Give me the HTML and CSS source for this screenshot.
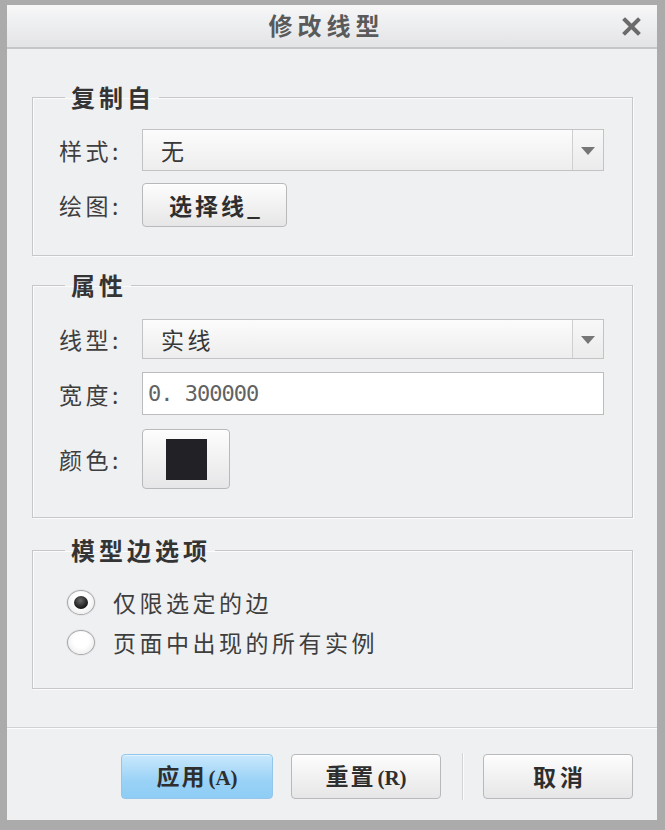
FILE: index.html
```html
<!DOCTYPE html>
<html lang="zh-CN">
<head>
<meta charset="utf-8">
<title>修改线型</title>
<link rel="stylesheet" href="styles.css">
</head>
<body>
<div class="frame">
  <div class="window">
    <div class="titlebar">
      <span></span>
      <span class="title">修改线型</span>
      <span class="close">
        <svg width="19" height="19" viewBox="0 0 19 19"><path d="M3 3 L16 16 M16 3 L3 16" stroke="#6b6b6b" stroke-width="4" stroke-linecap="square"/></svg>
      </span>
    </div>
    <div class="content">
      <fieldset class="group g1">
        <legend>复制自</legend>
        <div class="row">
          <span class="label">样式:</span>
          <div class="combo h42"><span class="combo-text">无</span><span class="combo-arrow"><i class="tri"></i></span></div>
        </div>
        <div class="row">
          <span class="label">绘图:</span>
          <button class="btn pick">选择线_</button>
        </div>
      </fieldset>
      <fieldset class="group g2">
        <legend>属性</legend>
        <div class="row">
          <span class="label">线型:</span>
          <div class="combo h40"><span class="combo-text">实线</span><span class="combo-arrow"><i class="tri"></i></span></div>
        </div>
        <div class="row">
          <span class="label">宽度:</span>
          <div class="input">0. 300000</div>
        </div>
        <div class="row">
          <span class="label">颜色:</span>
          <button class="btn swatch-btn"><span class="swatch"></span></button>
        </div>
      </fieldset>
      <fieldset class="group g3">
        <legend>模型边选项</legend>
        <div class="radio-row"><span class="radio checked"><span class="dot"></span></span><span class="radio-text">仅限选定的边</span></div>
        <div class="radio-row"><span class="radio"></span><span class="radio-text">页面中出现的所有实例</span></div>
      </fieldset>
    </div>
    <div class="footer">
      <button class="btn fbtn primary">应用<span class="key">(A)</span></button>
      <button class="btn fbtn reset">重置<span class="key">(R)</span></button>
      <span class="vsep"></span>
      <button class="btn fbtn cancel">取消</button>
    </div>
  </div>
</div>
</body>
</html>
```
FILE: styles.css
```css
* { box-sizing: border-box; }
html, body { margin: 0; padding: 0; }
body {
  width: 665px;
  height: 830px;
  font-family: "Noto Sans CJK SC", "Noto Sans", sans-serif;
  background: #a9a9a9;
}
.frame {
  width: 665px;
  height: 830px;
  padding: 5px 8px 10px 7px;
  background: #ababab;
}
.window {
  width: 650px;
  height: 815px;
  background: #eff0f2;
  display: flex;
  flex-direction: column;
}
.titlebar {
  height: 44px;
  flex: none;
  display: grid;
  grid-template-columns: 1fr auto 1fr;
  align-items: center;
  padding: 0 16px 2px 0;
  background: linear-gradient(#f7f7f8, #e3e4e6);
  border-bottom: 2px solid #c6c6c8;
}
.title {
  font-size: 24px;
  font-weight: 700;
  letter-spacing: 5px;
  color: #5a5a5a;
  line-height: 30px;
  padding-left: 5px;
}
.close {
  justify-self: end;
  display: flex;
  margin-top: 2px;
}
.content {
  flex: 1;
  padding: 33px 24px 38px 25px;
}
.group {
  margin: 0;
  border: 1px solid #c7c7c9;
  box-shadow: 1px 1px 0 #fbfbfb, inset 1px 1px 0 #fbfbfb;
  padding: 17px 28px 28px 26px;
  min-width: 0;
}
.group legend {
  font-size: 24px;
  font-weight: 700;
  letter-spacing: 4px;
  line-height: 30px;
  color: #343434;
  padding: 0 4px 0 6px;
  margin-left: 6px;
}
.g1 { margin-bottom: 14px; }
.g2 { margin-bottom: 17px; padding-top: 19px; }
.g3 { padding-bottom: 26px; }
.g1 .row + .row { margin-top: 12px; }
.g2 .row + .row { margin-top: 13px; }
.g2 .row:last-child { margin-top: 14px; }
.row {
  display: flex;
  align-items: center;
}
.label {
  width: 83px;
  flex: none;
  font-size: 23px;
  letter-spacing: 3.5px;
  color: #3e3e3e;
  line-height: 30px;
}
.combo {
  flex: 1;
  display: flex;
  border: 1px solid #c3c3c5;
  background: linear-gradient(#fcfcfc, #ededee);
}
.h42 { height: 42px; }
.h40 { height: 40px; }
.combo-text {
  flex: 1;
  display: flex;
  align-items: center;
  padding-left: 18px;
  font-size: 23px;
  letter-spacing: 3.5px;
  color: #383838;
}
.combo-arrow {
  width: 31px;
  flex: none;
  border-left: 1px solid #cfcfd1;
  display: flex;
  align-items: center;
  justify-content: center;
  background: linear-gradient(#f8f8f8, #ebebec);
}
.tri {
  width: 0;
  height: 0;
  border-left: 7px solid transparent;
  border-right: 7px solid transparent;
  border-top: 8px solid #767676;
  margin-top: 1px;
}
.input {
  flex: 1;
  height: 43px;
  background: #fff;
  border: 1px solid #bcbcbe;
  display: flex;
  align-items: center;
  padding-left: 5px;
  font-family: "DejaVu Sans Mono", "Liberation Mono", monospace;
  font-size: 22px;
  letter-spacing: -1px;
  color: #626262;
}
.btn {
  font-family: "Noto Sans CJK SC", "Noto Sans", sans-serif;
  border: 1px solid #b9b9bb;
  border-radius: 4px;
  background: linear-gradient(#fdfdfd, #e6e6e8);
  box-shadow: inset 0 1px 0 #fff;
  padding: 0;
  margin: 0;
  color: #2e2e2e;
  cursor: default;
}
.pick {
  width: 145px;
  height: 44px;
  font-size: 23px;
  font-weight: 700;
  letter-spacing: 3px;
  padding-left: 3px;
}
.swatch-btn {
  width: 88px;
  height: 60px;
  display: flex;
  align-items: center;
  justify-content: center;
}
.swatch {
  width: 41px;
  height: 41px;
  background: #222226;
}
.radio-row {
  height: 40px;
  display: flex;
  align-items: center;
  padding-left: 8px;
}
.radio {
  width: 28px;
  height: 25px;
  flex: none;
  border-radius: 50%;
  border: 1px solid #a8a8aa;
  background: radial-gradient(circle at 50% 40%, #ffffff 40%, #e4e4e6 100%);
  box-shadow: 0 0 0 1px #e6e6e8;
  display: flex;
  align-items: center;
  justify-content: center;
  margin-right: 18px;
}
.dot {
  width: 14px;
  height: 13px;
  border-radius: 50%;
  background: radial-gradient(circle at 45% 35%, #6a6a6a, #161616 70%);
}
.radio-text {
  font-size: 23px;
  letter-spacing: 3.5px;
  color: #3e3e3e;
  line-height: 30px;
}
.footer {
  flex: none;
  height: 93px;
  border-top: 1px solid #d2d2d4;
  box-shadow: inset 0 1px 0 #fdfdfd;
  padding: 26px 24px 21px 0;
  display: flex;
  justify-content: flex-end;
  align-items: flex-start;
}
.fbtn {
  display: block;
  width: 150px;
  height: 45px;
  font-size: 23px;
  font-weight: 700;
  letter-spacing: 2px;
  line-height: 41px;
  text-align: center;
}
.fbtn.primary {
  width: 152px;
  border-color: #93c6ea;
  background: linear-gradient(#c9e8fc, #9ad2f6 60%, #8ecdf5);
  box-shadow: inset 0 1px 0 #e2f3fe;
  margin-right: 18px;
}
.key {
  font-family: "Liberation Serif", serif;
  font-size: 21px;
  font-weight: 700;
  letter-spacing: 0;
  margin-left: 2px;
}
.vsep {
  width: 2px;
  height: 47px;
  margin: -1px 19px 0 21px;
  border-left: 1px solid #d4d4d6;
  border-right: 1px solid #fbfbfb;
}
.cancel { letter-spacing: 4px; padding-left: 4px; }
```
